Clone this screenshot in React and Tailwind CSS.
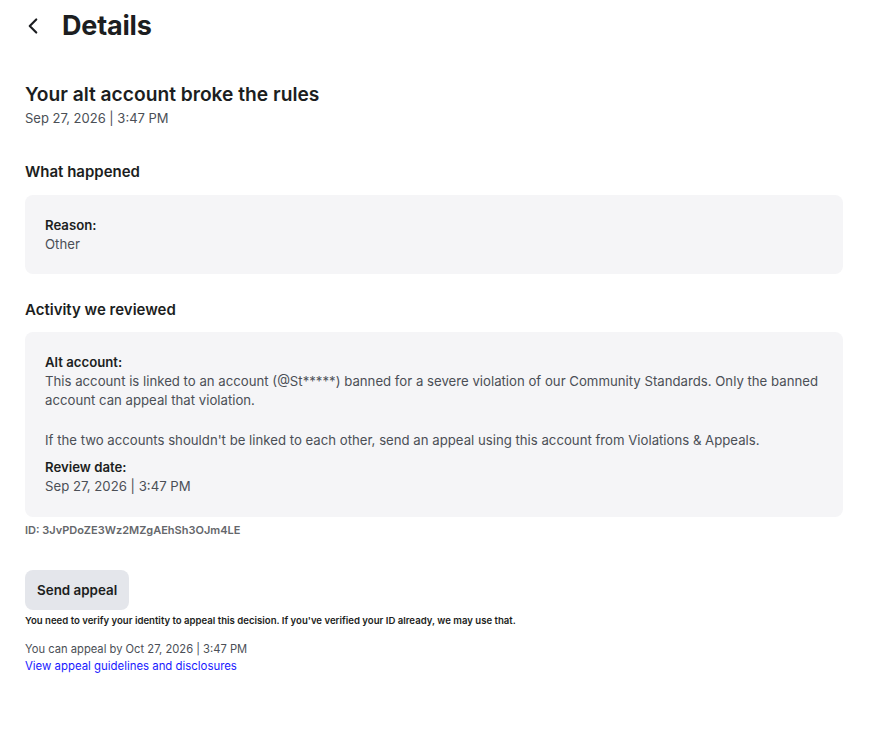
import { ChevronLeft } from 'lucide-react';

export default function App() {
  return (
    <div className="min-h-screen bg-white font-['Inter',sans-serif] text-[#1c1e21]">
      <div className="flex items-center px-[20px] pt-[8px]">
        <button type="button" className="flex h-[36px] w-[28px] items-center justify-start">
          <ChevronLeft className="h-[26px] w-[26px]" strokeWidth={2} />
        </button>
        <h1 className="ml-[14px] text-[27px] font-bold leading-[36px] tracking-[-0.2px]">Details</h1>
      </div>

      <div className="px-[25px] pr-[28px]">
        <h2 className="mt-[38px] text-[19.2px] font-semibold leading-[24px]">
          Your alt account broke the rules
        </h2>
        <p className="mt-[3px] text-[13px] leading-[18px] text-[#4b4f56]">Sep 27, 2026 | 3:47 PM</p>

        <h3 className="mt-[35px] text-[15px] font-semibold leading-[20px]">What happened</h3>
        <div className="mt-[13px] rounded-[8px] bg-[#f5f5f7] px-[20px] pb-[20px] pt-[21px]">
          <p className="text-[13.2px] font-semibold leading-[19px]">Reason:</p>
          <p className="text-[13.2px] leading-[19px] text-[#4b4f56]">Other</p>
        </div>

        <h3 className="mt-[26px] text-[15px] font-semibold leading-[20px]">Activity we reviewed</h3>
        <div className="mt-[12px] rounded-[8px] bg-[#f5f5f7] px-[20px] pb-[21px] pt-[21px]">
          <p className="text-[13.2px] font-semibold leading-[19px]">Alt account:</p>
          <p className="text-[13.2px] leading-[19px] text-[#4b4f56]">
            This account is linked to an account (@St*****) banned for a severe violation of our Community
            Standards. Only the banned account can appeal that violation.
          </p>
          <p className="mt-[21px] text-[13.2px] leading-[19px] text-[#4b4f56]">
            If the two accounts shouldn't be linked to each other, send an appeal using this account from
            Violations &amp; Appeals.
          </p>
          <p className="mt-[8px] text-[13.2px] font-semibold leading-[19px]">Review date:</p>
          <p className="text-[13.2px] leading-[19px] text-[#4b4f56]">Sep 27, 2026 | 3:47 PM</p>
        </div>
        <p className="mt-[6px] text-[11px] font-semibold leading-[14px] text-[#65676b]">
          ID: 3JvPDoZE3Wz2MZgAEhSh3OJm4LE
        </p>

        <button
          type="button"
          className="mt-[33px] h-[40px] rounded-[8px] bg-[#e4e6eb] px-[12px] text-[13.4px] font-semibold text-[#1c1e21]"
        >
          Send appeal
        </button>
        <p className="mt-[4px] text-[9.6px] font-semibold leading-[13px] text-[#1c1e21]">
          You need to verify your identity to appeal this decision. If you've verified your ID already, we may use
          that.
        </p>
        <p className="mt-[14px] text-[11.2px] leading-[16px] text-[#4b4f56]">
          You can appeal by Oct 27, 2026 | 3:47 PM
        </p>
        <a href="#" className="mt-[1px] block text-[11.4px] leading-[16px] text-[#1a1aff]">
          View appeal guidelines and disclosures
        </a>
      </div>
    </div>
  );
}
